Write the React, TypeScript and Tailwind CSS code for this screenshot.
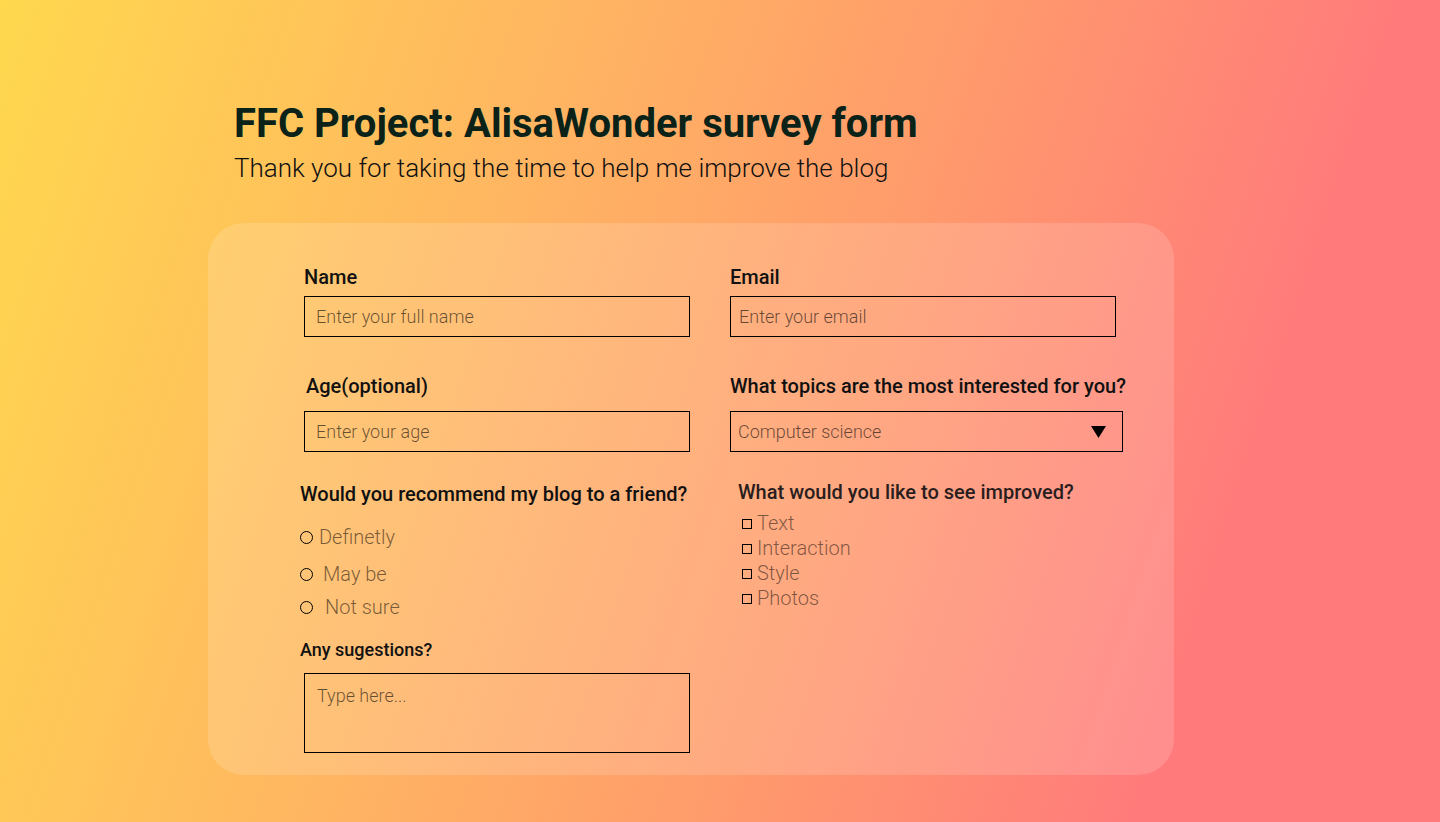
import React from 'react';

const radios = [
  { label: 'Definetly', gap: 'ml-[6px]', mt: 'mt-[23px]' },
  { label: 'May be', gap: 'ml-[10px]', mt: 'mt-[17px]' },
  { label: 'Not sure', gap: 'ml-[12px]', mt: 'mt-[13px]' },
];

const checks = ['Text', 'Interaction', 'Style', 'Photos'];

const inputCls =
  'block h-[41px] border border-black bg-transparent text-[18px] font-light text-black outline-none placeholder:text-black/60';

const App = () => {
  return (
    <div className="min-h-screen bg-[linear-gradient(108deg,#ffd84e_0%,#ffb462_35%,#ff9a6c_58%,#ff7b7b_82%,#ff7b7b_100%)] font-['Roboto',sans-serif] pt-[104px] pb-[47px]">
      <div className="ml-[234px]">
        <h1 className="text-[40px] font-bold leading-none text-[#0b2219]">
          FFC Project: AlisaWonder survey form
        </h1>
        <p className="mt-[11px] text-[26px] font-light leading-none text-[#111]">
          Thank you for taking the time to help me improve the blog
        </p>
      </div>

      <form className="ml-[208px] mt-[42px] flex w-[966px] rounded-[36px] bg-white/15 pl-[92px] pt-[44px] pb-[22px]">
        {/* left column */}
        <div className="flex w-[430px] flex-col">
          <label className="ml-1 text-[20px] font-medium leading-none text-[#111]">Name</label>
          <input className={`${inputCls} ml-1 mt-[9px] w-[386px] pl-[11px]`} placeholder="Enter your full name" />

          <label className="ml-[6px] mt-[39px] text-[20px] font-medium leading-none text-[#111]">Age(optional)</label>
          <input className={`${inputCls} ml-1 mt-[15px] w-[386px] pl-[11px]`} placeholder="Enter your age" />

          <p className="mt-[32px] text-[20px] font-medium leading-none text-[#111]">
            Would you recommend my blog to a friend?
          </p>
          {radios.map((r) => (
            <label key={r.label} className={`flex items-center ${r.mt} text-[20px] font-light leading-none text-black/55`}>
              <span className="h-[13px] w-[13px] shrink-0 rounded-full border-[1.5px] border-black" />
              <span className={r.gap}>{r.label}</span>
            </label>
          ))}

          <label className="mt-[24px] text-[18px] font-medium leading-none text-[#111]">Any sugestions?</label>
          <textarea
            className="ml-1 mt-[14px] block h-[80px] w-[386px] resize-none border border-black bg-transparent pl-[12px] pt-[8px] text-[18px] font-light text-black outline-none placeholder:text-black/60"
            placeholder="Type here..."
          />
        </div>

        {/* right column */}
        <div className="flex flex-col">
          <label className="text-[20px] font-medium leading-none text-[#111]">Email</label>
          <input className={`${inputCls} mt-[9px] w-[386px] pl-[8px]`} placeholder="Enter your email" />

          <label className="mt-[39px] text-[20px] font-medium leading-none text-[#111]">
            What topics are the most interested for you?
          </label>
          <div className="mt-[15px] flex h-[41px] w-[393px] items-center justify-between border border-black pl-[7px] pr-[16px]">
            <span className="text-[18px] font-light text-black/60">Computer science</span>
            <svg width="15" height="12" viewBox="0 0 15 12">
              <path d="M0 0 H15 L7.5 12 Z" fill="#000" />
            </svg>
          </div>

          <p className="ml-2 mt-[30px] text-[20px] font-medium leading-none text-[#2a1d1d]">
            What would you like to see improved?
          </p>
          <div className="ml-3 mt-[8px] flex flex-col">
            {checks.map((c) => (
              <label key={c} className="flex h-[25px] items-center text-[20px] font-light leading-none text-black/50">
                <span className="mt-[2px] h-[10px] w-[10px] shrink-0 border-[1.5px] border-black" />
                <span className="ml-[5px]">{c}</span>
              </label>
            ))}
          </div>
        </div>
      </form>
    </div>
  );
};

export default App;
